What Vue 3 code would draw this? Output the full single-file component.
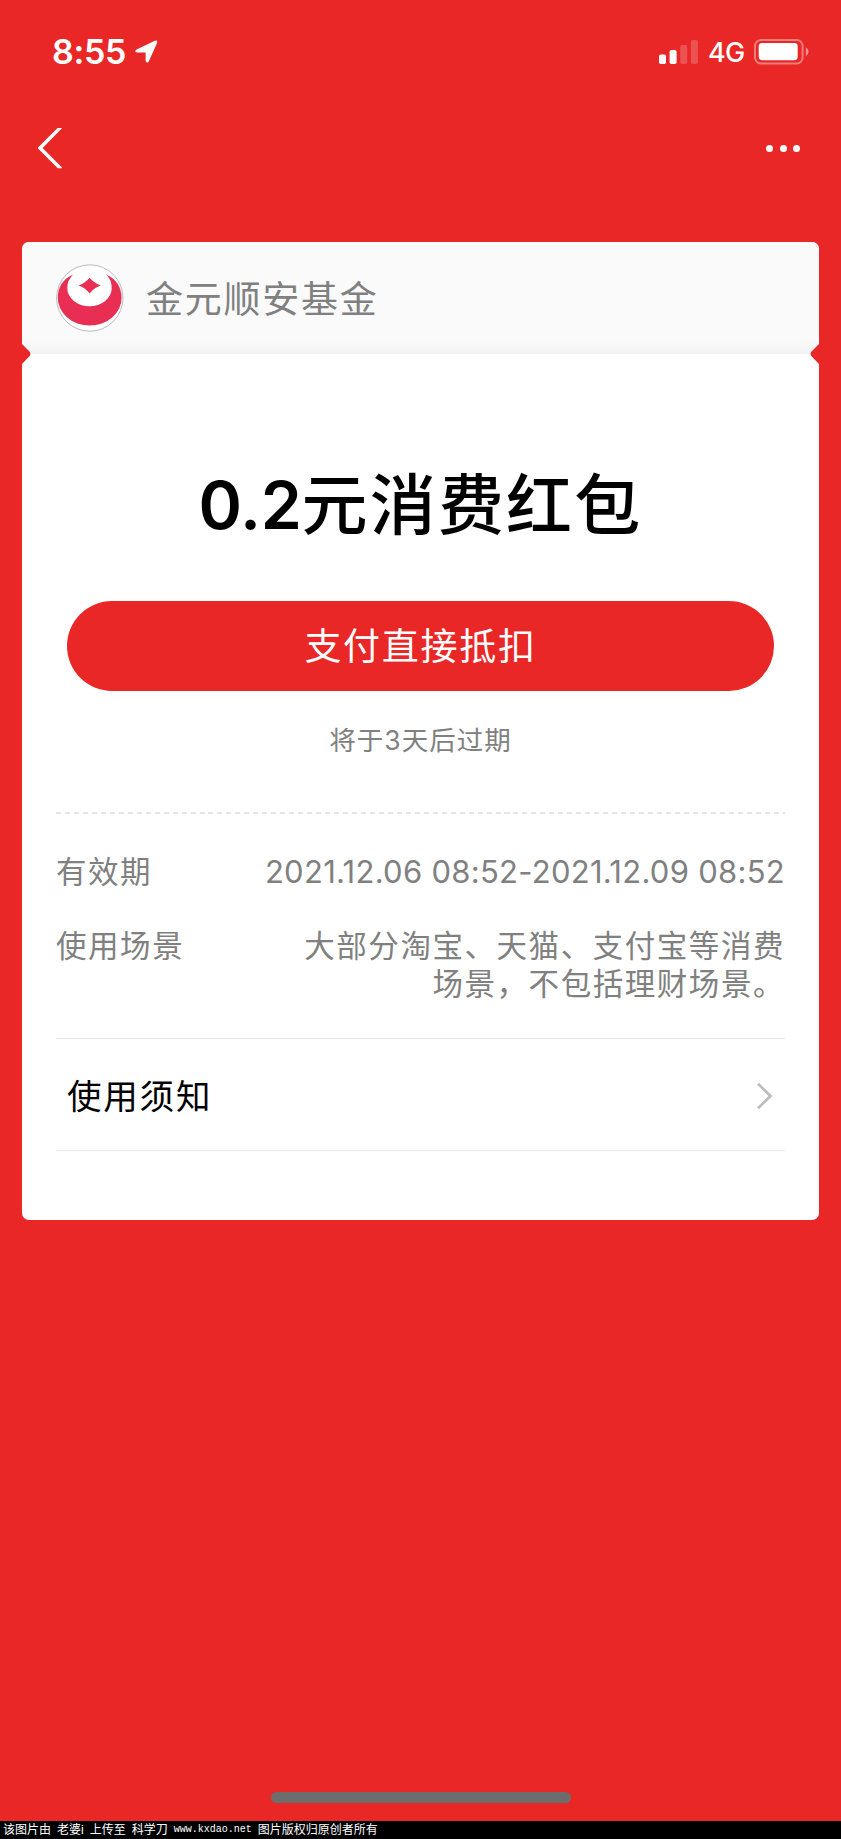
<script setup>
const bars = [
  { x: 0, y: 14.5, h: 9.5, o: 1 },
  { x: 10.6, y: 10, h: 14, o: 1 },
  { x: 21.2, y: 5, h: 19, o: 0.2 },
  { x: 31.9, y: 0, h: 24, o: 0.2 },
]
</script>

<template>
  <div class="page">
    <header class="status">
      <div class="clock">
        <span class="time">8:55</span>
        <svg class="loc" width="23" height="23" viewBox="0 0 23 23">
          <path d="M1.6 9.6 19.8 .8Q23 -.2 22 3L14 20.9C13 23.2 10.6 22.6 10.6 20.6V12.8Q10.6 12.4 10.2 12.4H2.4C-.2 12.4-.4 10.6 1.6 9.6Z" fill="#fff" />
        </svg>
      </div>
      <div class="signals">
        <svg width="39" height="24" viewBox="0 0 39 24">
          <rect v-for="b in bars" :key="b.x" :x="b.x" :y="b.y" width="7" :height="b.h" rx="1.8" fill="#fff" :opacity="b.o" />
        </svg>
        <span class="net">4G</span>
        <svg class="battery" width="56" height="26" viewBox="0 0 56 26">
          <rect x="1" y="1" width="47.6" height="23.6" rx="6" fill="none" stroke="#fff" stroke-width="2" opacity=".4" />
          <rect x="4.7" y="4" width="39" height="17.2" rx="3.4" fill="#fff" />
          <path d="M51.8 8.3Q54.6 10 54.6 12.8T51.8 17.3Z" fill="#fff" opacity=".5" />
        </svg>
      </div>
    </header>

    <nav class="nav">
      <svg width="26" height="42" viewBox="0 0 26 42">
        <path d="M20.6 1H25.2L5.6 20.9 25 40.4V41.2H20.8L1 21.6V20.4Z" fill="#fff" />
      </svg>
      <div class="more"><i></i><i></i><i></i></div>
    </nav>

    <main class="card">
      <section class="brand">
        <svg class="logo" width="68" height="68" viewBox="0 0 68 68">
          <circle cx="33.8" cy="34" r="33.2" fill="#fff" stroke="#aaa" stroke-width=".8" />
          <path d="M17.3 10.6C6 15.5 1.8 24 1.8 34A31.9 27.5 0 0 0 65.6 34C65.6 24 61 15.5 50.3 10.6Q55.7 16 55.7 24A22.2 18.3 0 0 1 11.3 24Q11.3 16 17.3 10.6Z" fill="#e92e53" />
          <path d="M33.6 13.8Q37.5 18.8 44.8 21.4 37.5 24 33.6 29.5 29.7 24 22.8 21.4 29.7 18.8 33.6 13.8Z" fill="#e92e53" />
        </svg>
        <span class="name">金元顺安基金</span>
      </section>

      <section class="offer">
        <h1><span class="amount">0.2</span>元消费红包</h1>
        <button class="pay">支付直接抵扣</button>
        <p class="expire">将于3天后过期</p>
      </section>

      <div class="dash"></div>

      <dl class="info">
        <div class="row first">
          <dt>有效期</dt>
          <dd class="date">2021.12.06 08:52-2021.12.09 08:52</dd>
        </div>
        <div class="row">
          <dt>使用场景</dt>
          <dd>大部分淘宝、天猫、支付宝等消费<br />场景，不包括理财场景。</dd>
        </div>
      </dl>

      <a class="notice">
        <span>使用须知</span>
        <svg width="17" height="28" viewBox="0 0 17 28">
          <path d="M2 1.8 14.5 14 2 26.2" fill="none" stroke="#bebebe" stroke-width="2.8" />
        </svg>
      </a>
      <svg class="notch left" width="9" height="20" viewBox="0 0 9 20"><path d="M0 0 7.2 7.3Q9.6 10 7.2 12.5L0 20Z" fill="#e92727" /></svg>
      <svg class="notch right" width="9" height="20" viewBox="0 0 9 20"><path d="M9 0 1.8 7.3Q-.6 10 1.8 12.5L9 20Z" fill="#e92727" /></svg>
    </main>

    <div class="home"></div>
    <footer class="credit"><span>该图片由</span><span>老婆i</span><span>上传至</span><span>科学刀</span><span class="url">www.kxdao.net</span><span>图片版权归原创者所有</span></footer>
  </div>
</template>

<style>
body {
  margin: 0;
  background: #e92727;
}
</style>

<style scoped>
.page {
  box-sizing: border-box;
  width: 841px;
  height: 1839px;
  display: flex;
  flex-direction: column;
  overflow: hidden;
  background: #e92727;
  color: #808080;
  font-family: Inter, "Noto Sans CJK SC", sans-serif;
}
svg { display: block; flex: none; }
.status {
  height: 104px;
  flex: none;
  display: flex;
  justify-content: space-between;
  align-items: center;
  padding: 0 31px 0 52px;
  color: #fff;
}
.clock, .signals { display: flex; align-items: center; }
.time {
  font-size: 34px;
  font-weight: 600;
  line-height: 40px;
  letter-spacing: -0.3px;
  width: 83px;
  white-space: nowrap;
}
.loc { margin-top: -2px; }
.net {
  font-size: 27px;
  font-weight: 500;
  line-height: 34px;
  letter-spacing: -0.8px;
  width: 46px;
  margin-left: 10px;
  margin-top: 1px;
  white-space: nowrap;
}
.nav {
  height: 138px;
  flex: none;
  box-sizing: border-box;
  display: flex;
  justify-content: space-between;
  align-items: flex-start;
  padding: 23px 41px 0 37px;
}
.more { display: flex; gap: 6.4px; padding-top: 17.6px; }
.more i {
  width: 7px;
  height: 7px;
  border-radius: 50%;
  background: #fff;
}
.card {
  position: relative;
  box-sizing: border-box;
  width: 797px;
  height: 978px;
  flex: none;
  margin-left: 22px;
  border-radius: 7px;
  background: #fff;
  overflow: hidden;
}
.brand {
  height: 112px;
  box-sizing: border-box;
  display: flex;
  align-items: center;
  padding-left: 34px;
  background: linear-gradient(#fafafa 0, #fafafa 86%, #f3f3f3 100%);
}
.name {
  margin-left: 22px;
  padding-top: 4px;
  font-size: 37px;
  letter-spacing: 1.75px;
  line-height: 50px;
}
.offer {
  height: 458px;
  display: flex;
  flex-direction: column;
  align-items: center;
}
h1 {
  margin: 101px 0 0;
  height: 100px;
  font-size: 66px;
  line-height: 100px;
  font-weight: 500;
  letter-spacing: 2.2px;
  color: #000;
  white-space: nowrap;
}
.amount { letter-spacing: -0.3px; font-weight: 560; }
.pay {
  width: 707px;
  height: 90px;
  margin: 46px 0 0;
  padding: 2px 0 0;
  border: 0;
  border-radius: 45px;
  background: #e92727;
  color: #fff;
  font-family: inherit;
  font-size: 37px;
  letter-spacing: 1.7px;
  line-height: 88px;
}
.expire {
  margin: 29px 0 0;
  font-size: 26.5px;
  letter-spacing: 1px;
  line-height: 40px;
}
.dash {
  height: 2px;
  margin: 0 34px;
  background: repeating-linear-gradient(90deg, #e6e6e6 0 5px, transparent 5px 8.97px);
}
.info {
  margin: 0 34px;
  height: 225px;
  box-sizing: border-box;
  padding-top: 39px;
  border-bottom: 1px solid #e6e6e6;
  font-size: 30.5px;
  letter-spacing: 1.55px;
  line-height: 38px;
}
.row { display: flex; justify-content: space-between; }
.first { margin-bottom: 36px; }
dt, dd { margin: 0; white-space: nowrap; }
dd { text-align: right; }
.date { font-size: 31px; letter-spacing: 0.28px; }
.notice {
  margin: 0 34px;
  height: 112px;
  box-sizing: border-box;
  display: flex;
  justify-content: space-between;
  align-items: center;
  padding: 0 12px 0 11px;
  border-bottom: 1px solid #e9e9e9;
  color: #000;
  font-size: 34.5px;
  letter-spacing: 1.8px;
}
.notice span { margin-top: -2px; }
.notice svg { margin-top: 2px; }
.notch { position: absolute; top: 102px; }
.left { left: 0; }
.right { right: 0; }
.home {
  width: 300px;
  height: 11px;
  flex: none;
  margin: 572px 0 0 271px;
  border-radius: 6px;
  background: #6d6d6d;
}
.credit {
  height: 18px;
  flex: none;
  margin-top: 18px;
  padding-left: 3px;
  display: flex;
  gap: 6px;
  background: #000;
  color: #fff;
  font-family: "Liberation Sans", "Noto Sans CJK SC", sans-serif;
  font-size: 12px;
  line-height: 18px;
  white-space: nowrap;
}
.url { font-family: "Liberation Mono", monospace; font-size: 10px; width: 78px; }
</style>
